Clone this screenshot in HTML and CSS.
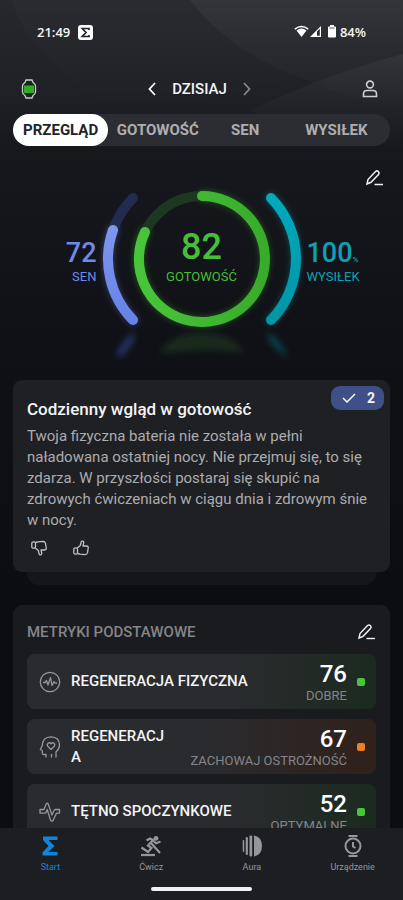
FILE: index.html
```html
<!DOCTYPE html>
<html lang="pl">
<head>
<meta charset="utf-8">
<meta name="viewport" content="width=device-width, initial-scale=1">
<title>Start</title>
<link rel="stylesheet" href="styles.css">
</head>
<body>
<svg class="backdrop" viewBox="0 0 403 150" preserveAspectRatio="none" aria-hidden="true">
  <defs>
    <linearGradient id="fadeA" x1="0" y1="0" x2="0" y2="1"><stop offset="0" stop-color="#fff" stop-opacity=".06"/><stop offset="1" stop-color="#fff" stop-opacity="0"/></linearGradient>
  </defs>
  <path d="M190 0Q228 50 300 78T403 110V0Z" fill="url(#fadeA)"/>
  <path d="M403 54Q320 76 250 111L403 150Z" fill="url(#fadeA)" opacity=".8"/>
  <path d="M12 0Q30 65 128 112L300 78Q228 50 190 0Z" fill="url(#fadeA)" opacity=".3"/>
</svg>
<div class="statusbar">
  <span class="status-group">
    <span>21:49</span>
    <svg width="15" height="15" viewBox="0 0 15 15"><rect width="15" height="15" rx="3" fill="#fff"/><path d="M11 5V3.500H4.300L8 7.500 4.300 11.500H11V10" fill="none" stroke="#222328" stroke-width="1.700"/></svg>
  </span>
  <span class="status-group status-right">
    <svg width="43" height="14" viewBox="0 0 43 14" fill="#fff">
      <path d="M2.500 5.500Q7.500 1.500 12.500 5.500L7.500 12Z"/><path d="M.8 4.200Q7.500-1 14.200 4.200" fill="none" stroke="#fff" stroke-width="1.500"/>
      <path d="M16 12 27 1V12Z"/><path d="M23 6.500 25.800 3.800V10.800H23Z" fill="#2c2d32"/>
      <path d="M36 1.500V0H40V1.500H41Q42 1.500 42 2.500V11.500Q42 12.500 41 12.500H35Q34 12.500 34 11.500V2.500Q34 1.500 35 1.500Z"/><path d="M35.500 2.500H40.500V3.500H35.500Z" fill="#55565a"/>
    </svg>
    <span>84%</span>
  </span>
</div>
<main>
  <header class="topbar">
    <button class="icon-btn" aria-label="Zegarek">
      <svg width="16" height="20" viewBox="0 0 16 20"><path d="M5 1H11L12 3.500Q14.500 5 14.500 7V13Q14.500 15 12 16.500L11 19H5L4 16.500Q1.500 15 1.500 13V7Q1.500 5 4 3.500Z" fill="#19251c" stroke="#c9cacb" stroke-width="1.300"/><path d="M3 6.500H13V14H3Z" fill="#30ad22"/></svg>
    </button>
    <div class="day">
      <button class="icon-btn" aria-label="Poprzedni dzień"><svg width="8" height="14" viewBox="0 0 8 14"><path d="M7 1 1.500 7 7 13" fill="none" stroke="#fff" stroke-width="1.800"/></svg></button>
      <h1>DZISIAJ</h1>
      <button class="icon-btn" aria-label="Następny dzień"><svg width="8" height="14" viewBox="0 0 8 14"><path d="M1 1 6.500 7 1 13" fill="none" stroke="#85868a" stroke-width="1.800"/></svg></button>
    </div>
    <button class="icon-btn" aria-label="Profil">
      <svg width="16" height="18" viewBox="0 0 16 18" fill="none" stroke="#cfcfd1" stroke-width="1.600"><circle cx="8" cy="4.500" r="3.400"/><path d="M1.500 16.500V14Q1.500 10.500 5 10.500H11Q14.500 10.500 14.500 14V16.500Z"/></svg>
    </button>
  </header>
  <nav class="tabs" aria-label="Widok">
    <button class="tab active">PRZEGLĄD</button>
    <button class="tab">GOTOWOŚĆ</button>
    <button class="tab">SEN</button>
    <button class="tab">WYSIŁEK</button>
  </nav>
  <div class="edit-row">
    <button class="icon-btn" aria-label="Edytuj wskaźniki">
      <svg width="18" height="16" viewBox="0 0 18 16" fill="none" stroke="#f2f2f2" stroke-width="1.500"><path d="M1 14 2 9.500 9.500 1.500Q11 .3 12.300 1.500T12.500 4.500L5 12.300 1 14Z"/><path d="M8.500 14.500H17"/></svg>
    </button>
  </div>
  <section class="gauges">
    <div class="side left"><strong>72</strong><span>SEN</span></div>
    <div class="dial">
      <svg width="204" height="180" viewBox="0 0 204 180" fill="none" stroke-width="10" stroke-linecap="round" aria-hidden="true">
        <defs>
          <linearGradient id="green" x1="0" y1="0" x2="1" y2="0"><stop offset="0" stop-color="#48c63a"/><stop offset="1" stop-color="#39ab2b"/></linearGradient>
          <linearGradient id="blue" x1="0" y1="0" x2="0" y2="1"><stop offset="0" stop-color="#7e97ec"/><stop offset="1" stop-color="#6683e7"/></linearGradient>
          <linearGradient id="teal" x1="0" y1="0" x2="0" y2="1"><stop offset="0" stop-color="#00a9bb"/><stop offset="1" stop-color="#0096a7"/></linearGradient>
          <filter id="glow" x="-20%" y="-20%" width="140%" height="140%"><feGaussianBlur stdDeviation="3"/></filter>
          <filter id="soft" x="-50%" y="-50%" width="200%" height="200%"><feGaussianBlur stdDeviation="3"/></filter>
          <g id="arcs">
            <path d="M102 11A63 63 0 1 1 45 47" stroke="url(#green)"/>
            <path d="M13 45A87 87 0 0 0 33 135" stroke="url(#blue)"/>
            <path d="M171 13A87 87 0 0 1 171 135" stroke="url(#teal)"/>
          </g>
        </defs>
        <use href="#arcs" filter="url(#glow)" opacity=".4"/>
        <circle cx="102" cy="74" r="63" stroke="#1c3820"/>
        <path d="M33 13A87 87 0 0 0 33 135" stroke="#212c50"/>
        <use href="#arcs"/>
        <g filter="url(#soft)" stroke="none">
          <path d="M59 168Q72 148 102 148T145 168Q125 165 102 165Z" fill="#235027" opacity=".4"/>
          <path d="M16 170Q23 155 34 147L34 156 22 172Z" fill="#3b50a8" opacity=".55"/>
          <path d="M168 147Q180 155 188 172L179 166 169 156Z" fill="#087887" opacity=".5"/>
        </g>
      </svg>
      <div class="readiness"><strong>82</strong><span>GOTOWOŚĆ</span></div>
    </div>
    <div class="side right"><strong>100<small>%</small></strong><span>WYSIŁEK</span></div>
  </section>
  <div class="stack">
    <article class="insight">
      <span class="badge"><svg width="14" height="10" viewBox="0 0 14 10"><path d="M1 5 5 9 13 1" fill="none" stroke="#fff" stroke-width="1.500"/></svg>2</span>
      <h2>Codzienny wgląd w gotowość</h2>
      <p>Twoja fizyczna bateria nie została w pełni naładowana ostatniej nocy. Nie przejmuj się, to się zdarza. W przyszłości postaraj się skupić na zdrowych ćwiczeniach w ciągu dnia i zdrowym śnie w nocy.</p>
      <div class="votes">
        <button class="icon-btn" aria-label="Nie podoba mi się"><svg width="16" height="16" viewBox="0 0 16 16"><use href="#thumb" transform="matrix(1 0 0 -1 0 16)"/></svg></button>
        <button class="icon-btn" aria-label="Podoba mi się"><svg width="16" height="16" viewBox="0 0 16 16"><g id="thumb" fill="none" stroke="#c2c2c4" stroke-width="1.300" stroke-linejoin="round"><path d="M4.300 8 7.300 5.500 8.200 2Q8.700.7 9.900 1.200 11 1.700 10.700 3L10 6H13.500Q15.500 6.200 15.200 8L14.500 12.700Q14 14.700 12 14.700L7 14.200 4.500 13.500"/><rect x=".8" y="7.800" width="3.700" height="6.400" rx="1.500"/></g></svg></button>
      </div>
    </article>
  </div>
  <section class="metrics">
    <div class="metrics-head">
      <h2>METRYKI PODSTAWOWE</h2>
      <button class="icon-btn" aria-label="Edytuj metryki">
        <svg width="18" height="16" viewBox="0 0 18 16" fill="none" stroke="#f2f2f2" stroke-width="1.400"><path d="M1 14 2 9.500 9.500 1.500Q11 .3 12.300 1.500T12.500 4.500L5 12.300 1 14Z"/><path d="M8.500 14.500H17"/></svg>
      </button>
    </div>
    <a class="metric good" href="#fizyczna">
      <svg width="22" height="22" viewBox="0 0 22 22" fill="none" stroke="#97979a" stroke-width="1.300" stroke-linejoin="round"><circle cx="11" cy="11" r="9.700"/><path d="M4 11.500H6L7.500 9.500 9 14 11.500 6.500 13 14.500 15 10.500 16 12H18"/></svg>
      <span class="name">REGENERACJA FIZYCZNA</span>
      <span class="value"><strong>76</strong><span>DOBRE</span></span>
      <i class="dot"></i>
    </a>
    <a class="metric warn" href="#psychiczna">
      <svg width="22" height="22" viewBox="0 0 22 22" fill="none" stroke="#97979a" stroke-width="1.300" stroke-linejoin="round"><path d="M7 21.500V18.500H4.500Q3.300 18.500 3.300 17V14.500L1.300 13.500 3.300 9.500Q3.500 1 12 .8 20.500 1 20.500 9 20.500 13 17 16V21.500"/><path d="M12.500 21.500V18"/><path d="M12 13.500 8.800 10.300Q7.500 8.500 9 7.200 10.700 6 12 7.800 13.300 6 15 7.200 16.500 8.500 15.200 10.300Z"/></svg>
      <span class="name">REGENERACJ<wbr>A</span>
      <span class="value"><strong>67</strong><span>ZACHOWAJ OSTROŻNOŚĆ</span></span>
      <i class="dot"></i>
    </a>
    <a class="metric good" href="#tetno">
      <svg width="22" height="22" viewBox="0 0 22 22" fill="none" stroke="#97979a" stroke-width="1.300" stroke-linejoin="round"><path d="M1 8.500H5L7.200 3Q8.200 1.500 9.200 3L13 14 15 9.500 16 8.500H20.500V12.200H17.500L14 19.500Q12.700 21 11.500 19L8.200 8.500 7 11.500 6 12.200H1Z"/></svg>
      <span class="name">TĘTNO SPOCZYNKOWE</span>
      <span class="value"><strong>52</strong><span>OPTYMALNE</span></span>
      <i class="dot"></i>
    </a>
  </section>
</main>
<footer>
  <nav class="bottomnav" aria-label="Główna">
    <a class="current" href="#start"><svg width="22" height="22" viewBox="0 0 22 22"><path d="M4 1.500H18.500V5H9.500L15.500 11 9.500 17H18.500V20.500H3.500V17.500L9.500 11 4 5Z" fill="#0f86d8"/></svg>Start</a>
    <a href="#cwicz"><svg width="22" height="22" viewBox="0 0 22 22" fill="none" stroke="#96969a" stroke-width="2.200"><circle cx="16" cy="3.300" r="2.400" fill="#96969a" stroke="none"/><path d="M6.500 5.500 10 3.500 13 5 8 10.500 11.500 13 8 17 1.500 12.500"/><path d="M11 8 20 18"/><path d="M12.500 5 16 8.300 20.500 6.500"/><path d="M1 20H15"/></svg>Ćwicz</a>
    <a href="#aura"><svg width="22" height="22" viewBox="0 0 22 22" fill="#96969a"><path d="M13 .5Q21 2 21 11T13 21.500Z"/><rect x="8.500" y=".5" width="2.700" height="21" rx="1"/><rect x="4.700" y="2" width="2.200" height="18" rx="1"/><rect x="1.700" y="5" width="1.500" height="12" rx=".7"/></svg>Aura</a>
    <a href="#urzadzenie"><svg width="22" height="22" viewBox="0 0 22 22" fill="none" stroke="#96969a" stroke-width="2"><circle cx="11" cy="11" r="7.500"/><path d="M11 7V11.500L13.500 13"/><path d="M6.500 1H15.500M6.500 21H15.500" stroke-width="2.200"/></svg>Urządzenie</a>
  </nav>
  <div class="homebar"></div>
</footer>
</body>
</html>
```
FILE: styles.css
```css
* {
  box-sizing: border-box;
}

body {
  margin: 0;
  height: 100vh;
  display: flex;
  flex-direction: column;
  overflow: hidden;
  position: relative;
  background: linear-gradient(#27282d 0, #202127 90px, #17181d 150px, #101116 340px, #0c0d11 600px);
  color: #f4f4f5;
  font-family: Roboto, "Noto Sans", sans-serif;
  font-size: 15px;
}

h1,
h2,
p {
  margin: 0;
  font-weight: 500;
}

svg {
  display: block;
  flex: none;
}

.backdrop {
  position: absolute;
  top: 0;
  left: 0;
  width: 100%;
  height: 150px;
  z-index: -1;
}

.icon-btn {
  padding: 0;
  border: 0;
  background: none;
}

.statusbar {
  flex: none;
  display: flex;
  justify-content: space-between;
  align-items: center;
  padding: 24px 37px 0;
  height: 40px;
  font-family: "Open Sans", Roboto, sans-serif;
  font-size: 13px;
  font-weight: 600;
}

.status-group {
  display: flex;
  align-items: center;
  gap: 8px;
}

.status-right {
  gap: 3px;
}

main {
  flex: 1;
  min-height: 0;
  overflow: hidden;
  padding: 38px 13px 0;
}

.topbar {
  display: flex;
  justify-content: space-between;
  align-items: center;
  height: 22px;
  padding: 0 12px 0 8px;
}

.day {
  display: flex;
  align-items: center;
  gap: 16px;
}

h1 {
  font-size: 15px;
}

.tabs {
  display: grid;
  grid-template-columns: 95fr 99fr 75fr 107fr;
  height: 32px;
  margin-top: 14px;
  border-radius: 16px;
  background: #2c2d32;
}

.tab {
  padding: 0;
  border: 0;
  border-radius: 16px;
  background: none;
  color: #aeaeb1;
  font: 700 15px Roboto, "Noto Sans", sans-serif;
}

.tab.active {
  background: #fff;
  color: #222328;
}

.edit-row {
  display: flex;
  justify-content: flex-end;
  padding: 24px 6px 0;
  height: 39px;
}

.gauges {
  display: grid;
  grid-template-columns: 1fr 204px 1fr;
  gap: 3px;
  height: 195px;
}

.side,
.readiness {
  display: flex;
  flex-direction: column;
  font-size: 13px;
  line-height: 16px;
}

.side {
  padding-top: 52px;
}

.side strong {
  height: 32px;
  font-size: 27px;
  font-weight: 500;
  line-height: 32px;
}

.left {
  align-items: flex-end;
  color: #6f89e8;
}

.right {
  color: #0aa2b4;
}

.right small {
  font-size: 8px;
  line-height: 8px;
}

.dial {
  display: grid;
}

.dial > * {
  grid-area: 1 / 1;
}

.readiness {
  align-items: center;
  padding-top: 40px;
  color: #45bf38;
}

.readiness strong {
  font-size: 36px;
  font-weight: 500;
  line-height: 44px;
}

.stack::after {
  content: "";
  display: block;
  height: 13px;
  margin: 0 14px;
  border-radius: 0 0 12px 12px;
  background: #15161a;
}

.insight {
  position: relative;
  padding: 18px 12px 16px 14px;
  border-radius: 9px;
  background: #1f2024;
}

.insight h2 {
  font-size: 17px;
  line-height: 22px;
}

.insight p {
  margin-top: 6px;
  color: #acacaf;
  font-size: 15px;
  font-weight: 400;
  line-height: 21px;
}

.badge {
  position: absolute;
  top: 6px;
  right: 6px;
  display: flex;
  align-items: center;
  gap: 11px;
  height: 24px;
  padding: 0 9px 0 11px;
  border-radius: 9px;
  background: #3f4f88;
  font-size: 14px;
  font-weight: 700;
}

.votes {
  display: flex;
  gap: 26px;
  margin-top: 9px;
  padding-left: 4px;
}

.metrics {
  margin-top: 20px;
  padding: 14px;
  border-radius: 9px;
  background: #1a1b1f;
}

.metrics-head {
  display: flex;
  justify-content: space-between;
  align-items: center;
  height: 26px;
  margin-bottom: 9px;
}

.metrics h2 {
  color: #858589;
  font-size: 15px;
}

.metric {
  display: flex;
  align-items: center;
  gap: 10px;
  height: 55px;
  margin-bottom: 10px;
  padding: 0 11px 0 12px;
  border-radius: 8px;
  color: #f4f4f5;
  text-decoration: none;
}

.good {
  background: linear-gradient(90deg, #2a2b2f 55%, #1c2a20);
}

.warn {
  background: linear-gradient(90deg, #2a2b2f 50%, #30211a);
}

.name {
  flex: 1;
  margin-right: 12px;
  font-size: 15px;
  font-weight: 500;
  line-height: 21px;
}

.value {
  display: flex;
  flex-direction: column;
  align-items: flex-end;
  color: #858589;
  font-size: 13px;
  line-height: 16px;
}

.value strong {
  color: #fff;
  font-size: 24px;
  font-weight: 500;
  line-height: 28px;
}

.dot {
  width: 8px;
  height: 8px;
  border-radius: 2px;
  background: #48c63a;
}

.warn .dot {
  background: #ec811f;
}

footer {
  flex: none;
  padding: 7px 0 9px;
  background: #1d1e21;
}

.bottomnav {
  display: grid;
  grid-template-columns: repeat(4, 1fr);
  height: 52px;
}

.bottomnav a {
  display: flex;
  flex-direction: column;
  align-items: center;
  gap: 3px;
  color: #96969a;
  font-size: 9px;
  line-height: 14px;
  text-decoration: none;
}

.bottomnav .current {
  color: #0f86d8;
}

.homebar {
  width: 25%;
  height: 4px;
  margin: 0 auto;
  border-radius: 2px;
  background: #f1f0f3;
}
```
